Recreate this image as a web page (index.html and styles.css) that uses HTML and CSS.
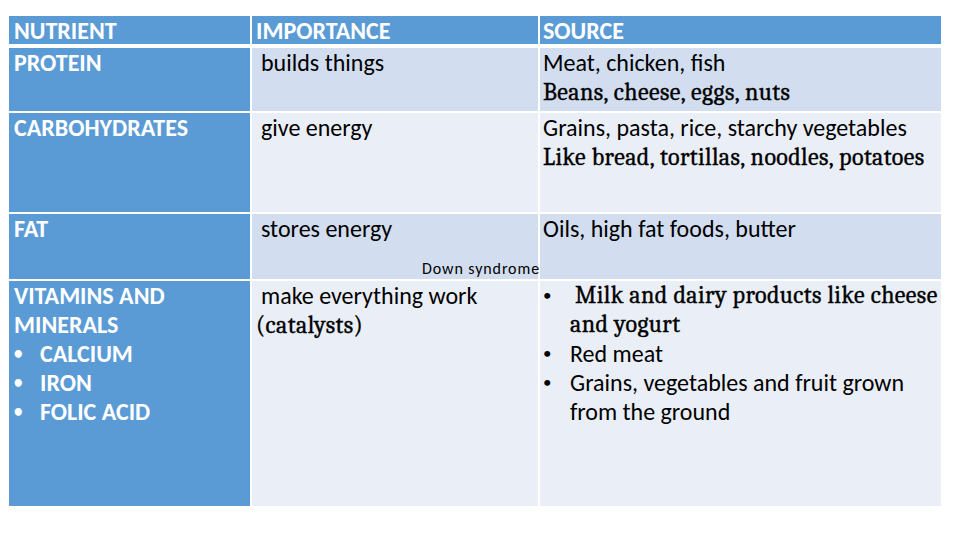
FILE: index.html
```html
<!DOCTYPE html>
<html>
<head>
<meta charset="utf-8">
<link rel="stylesheet" href="styles.css">
</head>
<body>
<div class="table">
  <div class="cell head c1">NUTRIENT</div>
  <div class="cell head c2">IMPORTANCE</div>
  <div class="cell head c3">SOURCE</div>

  <div class="cell name c1">PROTEIN</div>
  <div class="cell dark c2"><span class="ind">builds things</span></div>
  <div class="cell dark c3">Meat, chicken, fish<br><span class="serif">Beans, cheese, eggs, nuts</span></div>

  <div class="cell name c1">CARBOHYDRATES</div>
  <div class="cell light c2"><span class="ind">give energy</span></div>
  <div class="cell light c3"><span class="spaced">Grains, pasta, rice, starchy vegetables</span><br><span class="serif">Like bread, tortillas, noodles, potatoes</span></div>

  <div class="cell name c1">FAT</div>
  <div class="cell dark c2 stack"><span class="ind">stores energy</span><span class="note">Down syndrome</span></div>
  <div class="cell dark c3">Oils, high fat foods, butter</div>

  <div class="cell name c1">
    VITAMINS AND<br>MINERALS
    <ul class="list">
      <li><span class="dot">•</span><span>CALCIUM</span></li>
      <li><span class="dot">•</span><span>IRON</span></li>
      <li><span class="dot">•</span><span>FOLIC ACID</span></li>
    </ul>
  </div>
  <div class="cell light c2"><span class="ind">make everything work</span><br><span class="serif">(catalysts)</span></div>
  <div class="cell light c3">
    <ul class="list src">
      <li><span class="dot">•</span><span class="serif"><span class="sp"></span>Milk and dairy products like cheese and yogurt</span></li>
      <li><span class="dot">•</span><span>Red meat</span></li>
      <li><span class="dot">•</span><span>Grains, vegetables and fruit grown from the ground</span></li>
    </ul>
  </div>
</div>
</body>
</html>
```

FILE: styles.css
```css
html, body {
  margin: 0;
  padding: 0;
  background: #ffffff;
}
body {
  width: 960px;
  height: 540px;
  overflow: hidden;
  font-family: Carlito, Lato, "Liberation Sans", sans-serif;
}
.table {
  display: grid;
  grid-template-columns: 241px 286px 401px;
  grid-template-rows: 31px 63px 99px 65px 225px;
  column-gap: 2px;
  row-gap: 2px;
  margin: 15px 0 0 9px;
  width: 932px;
}
.cell {
  font-size: 24px;
  line-height: 29px;
  padding: 0 2px 0 5px;
  color: #000000;
  box-sizing: border-box;
  overflow: visible;
}
.c1 {
  padding-left: 5px;
}
.c2 {
  padding-left: 4px;
}
.c3 {
  padding-left: 3px;
  padding-right: 0;
}
.head {
  background: #5b9bd5;
  color: #ffffff;
  font-weight: bold;
  margin-top: 1px;
  margin-bottom: 2px;
}
.name {
  background: #5b9bd5;
  color: #ffffff;
  font-weight: bold;
}
.dark {
  background: #d2deef;
}
.light {
  background: #eaeff7;
}
.ind {
  padding-left: 5px;
}
.serif {
  font-family: Caladea, "Liberation Serif", serif;
  letter-spacing: 0.4px;
  -webkit-text-stroke: 0.35px #000000;
}
.stack {
  display: flex;
  flex-direction: column;
}
.note {
  margin-top: auto;
  align-self: flex-end;
  margin-right: -4px;
  font-size: 16px;
  line-height: 18px;
  letter-spacing: 0.9px;
  padding-bottom: 1px;
}
.list {
  list-style: none;
  margin: 0;
  padding: 0;
}
.list li {
  display: flex;
}
.list .dot {
  flex: 0 0 26px;
  font-size: 17px;
}
.src .dot {
  flex: 0 0 27px;
  padding-left: 0;
}
.sp {
  display: inline-block;
  width: 5px;
}
```
